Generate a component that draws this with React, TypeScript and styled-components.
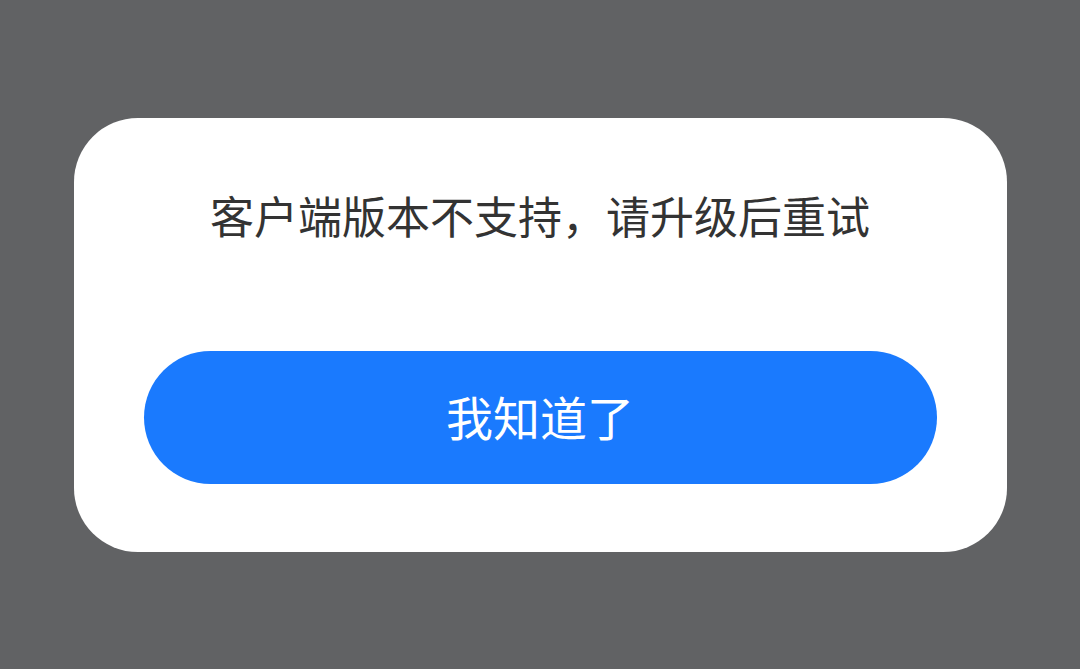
import React from "react";
import styled, { createGlobalStyle } from "styled-components";

const GlobalStyle = createGlobalStyle`
  html, body {
    margin: 0;
    padding: 0;
    background: #616264;
  }
  body {
    font-family: "Noto Sans CJK SC", "Noto Sans", sans-serif;
  }
`;

const Overlay = styled.div`
  width: 100vw;
  height: 100vh;
  display: flex;
  align-items: center;
  justify-content: center;
  background: #616264;
`;

const Dialog = styled.div`
  box-sizing: border-box;
  width: 933px;
  height: 434px;
  background: #ffffff;
  border-radius: 64px;
  padding: 67px 70px 68px;
  display: flex;
  flex-direction: column;
  align-items: center;
`;

const Message = styled.p`
  margin: 0;
  height: 60px;
  line-height: 60px;
  font-size: 44px;
  color: #333333;
  text-align: center;
  white-space: nowrap;
`;

const ConfirmButton = styled.button`
  margin-top: 106px;
  width: 100%;
  height: 133px;
  border: none;
  border-radius: 66.5px;
  background: #1a7afe;
  color: #ffffff;
  font-family: "Noto Sans CJK SC", "Noto Sans", sans-serif;
  font-size: 47px;
  line-height: 1;
  padding: 0 0 4px;
  cursor: pointer;
`;

export default function App() {
  return (
    <>
      <GlobalStyle />
      <Overlay>
        <Dialog>
          <Message>客户端版本不支持，请升级后重试</Message>
          <ConfirmButton>我知道了</ConfirmButton>
        </Dialog>
      </Overlay>
    </>
  );
}
